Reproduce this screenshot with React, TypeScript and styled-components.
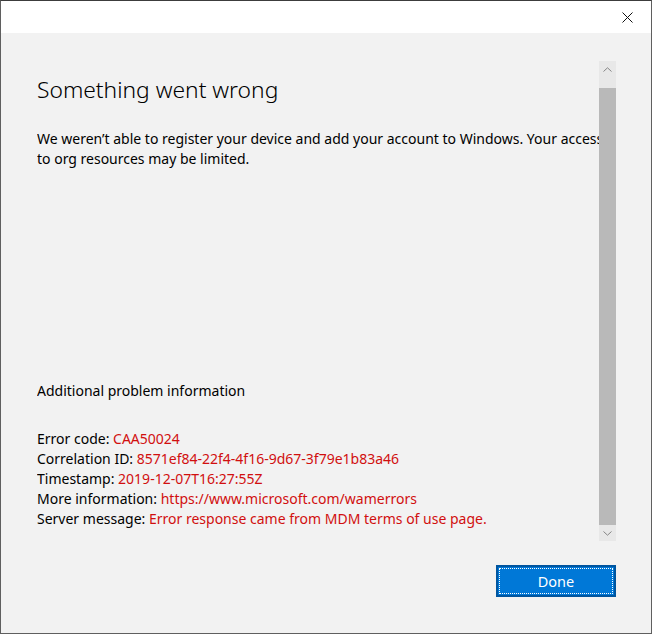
import React from 'react'
import styled, { createGlobalStyle } from 'styled-components'

const GlobalStyle = createGlobalStyle`
  html, body {
    margin: 0;
    padding: 0;
    background: #2b2b2b;
  }
  body {
    font-family: 'Segoe UI', 'Noto Sans', 'Open Sans', sans-serif;
  }
`

const Window = styled.div`
  box-sizing: border-box;
  width: 652px;
  height: 634px;
  display: flex;
  flex-direction: column;
  border: 1px solid #5f5f5f;
  border-top-color: #3c3c3c;
  background: #f2f2f2;
`

const TitleBar = styled.div`
  height: 32px;
  background: #ffffff;
  display: flex;
  justify-content: flex-end;
  align-items: center;
`

const CloseButton = styled.button`
  width: 46px;
  height: 32px;
  border: none;
  background: transparent;
  display: flex;
  align-items: center;
  justify-content: center;
  padding: 0;
  margin-right: 1px;
  cursor: pointer;
`

const Body = styled.div`
  flex: 1;
  display: flex;
  flex-direction: column;
  padding: 28px 35px 35px 36px;
`

const ScrollArea = styled.div`
  display: flex;
  height: 480px;
`

const Content = styled.div`
  flex: 1;
  overflow: hidden;
  padding-top: 13px;
  color: #000000;
  font-size: 14px;
  line-height: 20px;
  white-space: nowrap;
`

const Title = styled.h1`
  margin: 0;
  font-size: 22.8px;
  font-weight: 300;
  line-height: 32px;
  color: #000000;
`

// wider than the visible column, so the first line runs under the scrollbar
const Paragraph = styled.p`
  margin: 23px 0 0;
  white-space: normal;
  width: 576px;
`

const SectionHeading = styled.div`
  margin-top: 212px;
`

const InfoList = styled.div`
  margin-top: 28px;
  display: flex;
  flex-direction: column;
`

const InfoValue = styled.span`
  color: #d10f0f;
`

const Scrollbar = styled.div`
  width: 17px;
  display: flex;
  flex-direction: column;
  background: #e8e8e8;
`

const ArrowButton = styled.div`
  height: 16px;
  display: flex;
  align-items: center;
  justify-content: center;
`

const Track = styled.div`
  height: 11px;
`

const Thumb = styled.div`
  flex: 1;
  background: #b9b9b9;
`

const Footer = styled.div`
  display: flex;
  justify-content: flex-end;
  padding-top: 24px;
`

const DoneButton = styled.button`
  width: 120px;
  height: 32px;
  box-sizing: border-box;
  border: 2px solid #00559f;
  background: #0078d7;
  color: #ffffff;
  font-family: 'Segoe UI', 'Noto Sans', 'Open Sans', sans-serif;
  font-size: 14.5px;
  outline: 1px dotted #ffffff;
  outline-offset: -4px;
  cursor: pointer;
`

const Chevron = ({ up }: { up?: boolean }) => (
  <svg width="9" height="5" viewBox="0 0 9 5">
    <path
      d={up ? 'M0.5 4.5 L4.5 0.8 L8.5 4.5' : 'M0.5 0.5 L4.5 4.2 L8.5 0.5'}
      fill="none"
      stroke="#858585"
      strokeWidth="1"
    />
  </svg>
)

const info: [string, string][] = [
  ['Error code: ', 'CAA50024'],
  ['Correlation ID: ', '8571ef84-22f4-4f16-9d67-3f79e1b83a46'],
  ['Timestamp: ', '2019-12-07T16:27:55Z'],
  ['More information: ', 'https://www.microsoft.com/wamerrors'],
  ['Server message: ', 'Error response came from MDM terms of use page.'],
]

export default function App() {
  return (
    <>
      <GlobalStyle />
      <Window>
        <TitleBar>
          <CloseButton aria-label="Close">
            <svg width="11" height="11" viewBox="0 0 11 11">
              <path d="M0.5 0.5 L10.5 10.5 M10.5 0.5 L0.5 10.5" stroke="#111" strokeWidth="1" />
            </svg>
          </CloseButton>
        </TitleBar>
        <Body>
          <ScrollArea>
            <Content>
              <Title>Something went wrong</Title>
              <Paragraph>
                We weren’t able to register your device and add your account to Windows. Your access
                to org resources may be limited.
              </Paragraph>
              <SectionHeading>Additional problem information</SectionHeading>
              <InfoList>
                {info.map(([label, value]) => (
                  <div key={label}>
                    {label}
                    <InfoValue>{value}</InfoValue>
                  </div>
                ))}
              </InfoList>
            </Content>
            <Scrollbar>
              <ArrowButton>
                <Chevron up />
              </ArrowButton>
              <Track />
              <Thumb />
              <ArrowButton>
                <Chevron />
              </ArrowButton>
            </Scrollbar>
          </ScrollArea>
          <Footer>
            <DoneButton>Done</DoneButton>
          </Footer>
        </Body>
      </Window>
    </>
  )
}
